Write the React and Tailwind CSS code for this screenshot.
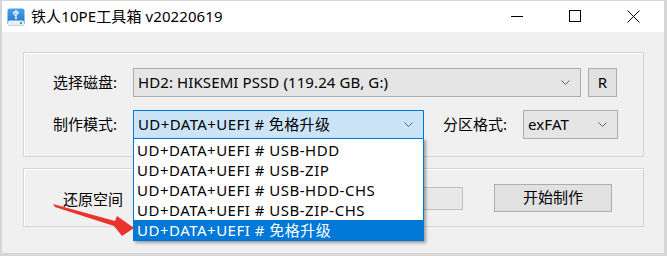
import React from 'react';

const font = "font-['Noto_Sans','Noto_Sans_CJK_SC',sans-serif]";

function Chevron() {
    return (
        <svg width="9" height="5" viewBox="0 0 9 5" className="shrink-0">
            <polyline points="0.5,0.5 4.5,4.5 8.5,0.5" fill="none" stroke="#606060" strokeWidth="1" />
        </svg>
    );
}

function Combo({ value, width, focused, wide }) {
    const tone = focused
        ? 'bg-[#cce4f7] border-[#0078d7]'
        : 'bg-[#e5e5e5] border-[#adadad]';
    return (
        <div className={`${width} h-[29px] border ${tone} flex items-center pl-[4px] pr-[10px] shrink-0`}>
            <span className={`flex-1 text-[15px] leading-none text-black whitespace-nowrap ${wide ? 'tracking-[0.4px]' : 'tracking-[0.1px]'}`}>{value}</span>
            <Chevron />
        </div>
    );
}

function AppIcon() {
    return (
        <svg width="18" height="18" viewBox="0 0 18 18">
            <defs>
                <linearGradient id="ib" x1="0" y1="0" x2="0" y2="1">
                    <stop offset="0" stopColor="#4aa3ec" />
                    <stop offset="1" stopColor="#1b6fc4" />
                </linearGradient>
            </defs>
            <rect x="0.5" y="0.5" width="17" height="17" rx="2.5" fill="url(#ib)" />
            <rect x="1" y="12.5" width="16" height="5" rx="1.5" fill="#e9eef3" />
            <rect x="13" y="14" width="2" height="2" fill="#3fb34f" />
            <path d="M9 2.5 V10 M9 2.5 l-1.3 1.6 h2.6 Z M9 8 l-2.2 -1.6 V5 M9 7 l2 -1.3 V4.5" stroke="#fff" strokeWidth="1" fill="none" />
            <circle cx="6.8" cy="4.6" r="0.9" fill="#fff" />
            <rect x="10.4" y="3.8" width="1.3" height="1.3" fill="#fff" />
            <circle cx="9" cy="10.3" r="1" fill="#fff" />
        </svg>
    );
}

export default function App() {
    const items = [
        'UD+DATA+UEFI # USB-HDD',
        'UD+DATA+UEFI # USB-ZIP',
        'UD+DATA+UEFI # USB-HDD-CHS',
        'UD+DATA+UEFI # USB-ZIP-CHS',
        'UD+DATA+UEFI # 免格升级',
    ];

    return (
        <div className={`relative w-[667px] h-[256px] overflow-hidden bg-[#f0f0f0] border-l-2 border-t border-r-[3px] border-b-[3px] border-[#d6d6d6] ${font}`}>
            {/* title bar */}
            <div className="h-[31px] bg-white flex items-center">
                <div className="ml-[5px] mt-[1px]">
                    <AppIcon />
                </div>
                <span className="ml-[6px] text-[15px] leading-none text-black whitespace-nowrap tracking-[0.1px]">铁人10PE工具箱 v20220619</span>
                <div className="ml-auto flex mr-[2px] h-full">
                    <div className="w-[58px] flex items-center justify-center">
                        <div className="w-[12px] h-px bg-black mt-[-1px]" />
                    </div>
                    <div className="w-[58px] flex items-center justify-center">
                        <div className="w-[12px] h-[12px] border border-black mt-[-1px]" />
                    </div>
                    <div className="w-[58px] flex items-center justify-center">
                        <svg width="13" height="13" viewBox="0 0 13 13" className="mt-[-1px]">
                            <path d="M0.5 0.5 L12.5 12.5 M12.5 0.5 L0.5 12.5" stroke="#000" strokeWidth="1" />
                        </svg>
                    </div>
                </div>
            </div>

            {/* client */}
            <div className="pl-[21px] pt-[20px]">
                <div className="w-[621px] h-[105px] border border-[#d5d5d5] shadow-[inset_1px_1px_0_#ffffff] pt-[15px] pl-[29px]">
                    <div className="flex items-center">
                        <span className="w-[80px] text-[15px] leading-none text-black">选择磁盘:</span>
                        <Combo value="HD2: HIKSEMI PSSD (119.24 GB, G:)" width="w-[448px]" />
                        <div className="ml-[7px] w-[29px] h-[29px] bg-[#e1e1e1] border border-[#adadad] flex items-center justify-center text-[15px] leading-none text-black">R</div>
                    </div>
                    <div className="flex items-center mt-[13px]">
                        <span className="w-[80px] text-[15px] leading-none text-black">制作模式:</span>
                        <Combo value="UD+DATA+UEFI # 免格升级" width="w-[291px]" focused wide />
                        <span className="ml-[19px] w-[80px] text-[15px] leading-none text-black">分区格式:</span>
                        <Combo value="exFAT" width="w-[95px]" />
                    </div>
                </div>

                <div className="mt-[11px] w-[621px] h-[59px] border border-[#d5d5d5] shadow-[inset_1px_1px_0_#ffffff] pl-[39px] flex items-center">
                    <span className="w-[68px] text-[15px] leading-none text-black mt-[3px]">还原空间</span>
                    <div className="ml-[4px] w-[2px] h-[3px] bg-[#e0b040]" />
                    <div className="ml-[2px] w-[324px] h-[23px] bg-[#e8e8e8] border border-[#bfbfbf] mt-[2px]" />
                    <div className="ml-[31px] w-[118px] h-[28px] bg-[#e1e1e1] border border-[#adadad] flex items-center justify-center text-[15px] leading-none text-black">开始制作</div>
                </div>
            </div>

            {/* open dropdown list */}
            <div className="absolute left-[131px] top-[137px] w-[291px] bg-white border border-[#0078d7] pt-px shadow-[2px_2px_3px_rgba(0,0,0,0.35)]">
                {items.map((t, i) => (
                    <div
                        key={t}
                        className={`h-[20px] pl-[3px] flex items-center text-[15px] leading-none whitespace-nowrap tracking-[0.5px] ${i === items.length - 1 ? 'bg-[#0078d7] text-white' : 'text-black'}`}
                    >
                        {t}
                    </div>
                ))}
            </div>

            {/* annotation arrow */}
            <svg className="absolute -left-[2px] -top-px pointer-events-none" width="667" height="256" viewBox="0 0 667 256">
                <path d="M53 204 L115 221 L117 216 L134 228 L122 236 L114 226 L55 207 Z" fill="#e9342b" />
            </svg>
        </div>
    );
}
